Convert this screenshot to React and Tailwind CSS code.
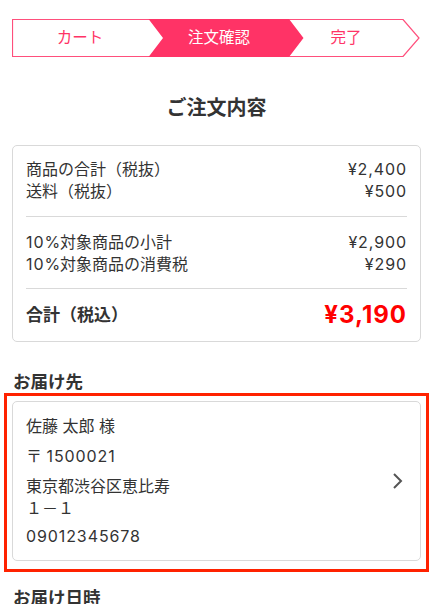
import React from "react";

const font = { fontFamily: 'Inter, "Noto Sans CJK JP", "Noto Sans", sans-serif' };

function N({ children }) {
  return <span className="tracking-[0.9px]">{children}</span>;
}

function Stepper() {
  return (
    <div className="relative mx-[12px] mt-[19px] h-[38px] w-[408px]">
      <svg className="absolute left-0 top-0" width="408" height="38" viewBox="0 0 408 38">
        <path d="M0.5 0.5 H391 L407 19 L391 37.5 H0.5 Z" fill="white" stroke="#ff4f7c" strokeWidth="1.2" />
        <polygon points="136.5,0 277,0 291.5,19 277,38 136.5,38 151,19" fill="#ff3366" />
      </svg>
      <div className="relative flex h-full items-center text-[15.5px]">
        <div className="flex w-[136px] justify-center text-[#ff3366]">カート</div>
        <div className="flex w-[142px] justify-center text-white">注文確認</div>
        <div className="flex w-[112px] justify-center text-[#ff3366]">完了</div>
      </div>
    </div>
  );
}

function Row({ label, value }) {
  return (
    <div className="flex justify-between leading-[22px]">
      <span>{label}</span>
      <N>{value}</N>
    </div>
  );
}

export default function App() {
  return (
    <div className="h-[604px] w-[433px] overflow-hidden bg-white text-[#333]" style={font}>
      <Stepper />
      <h1 className="mt-[37px] text-center text-[20px] font-bold leading-[28px]">ご注文内容</h1>

      <div className="mx-[12px] mt-[23px] rounded-[5px] border border-[#d9d9d9] px-[13px] pt-[12px] pb-[11px] text-[16px]">
        <Row label="商品の合計（税抜）" value="¥2,400" />
        <Row label="送料（税抜）" value="¥500" />
        <div className="mt-[14px] border-t border-[#d9d9d9]" />
        <div className="mt-[14px]">
          <Row label={<><N>10</N>%対象商品の小計</>} value="¥2,900" />
          <Row label={<><N>10</N>%対象商品の消費税</>} value="¥290" />
        </div>
        <div className="mt-[13px] border-t border-[#d9d9d9]" />
        <div className="mt-[11px] flex items-center justify-between leading-[30px]">
          <span className="text-[17px] font-bold">合計（税込）</span>
          <span className="text-[24px] font-bold tracking-[1px] text-[#ff0000]">¥3,190</span>
        </div>
      </div>

      <h2 className="mx-[13px] mt-[27px] text-[17.5px] font-bold leading-[26px]">お届け先</h2>

      <div className="mx-[4px] mt-[-2px] border-[3px] border-[#ff2200] px-[5px] pt-[5px] pb-[8px]">
        <div className="flex items-center rounded-[5px] border border-[#d9d9d9] pl-[13px] pr-[16px] pt-[13px] pb-[13px] text-[16px] leading-[22px]">
          <div className="flex flex-1 flex-col">
            <span>佐藤 太郎 様</span>
            <span className="mt-[8px]">〒 <N>1500021</N></span>
            <span className="mt-[8px]">東京都渋谷区恵比寿</span>
            <span>１－１</span>
            <span className="mt-[6px]"><N>09012345678</N></span>
          </div>
          <svg width="12" height="18" viewBox="0 0 12 18" fill="none">
            <path d="M2 2 L9 9 L2 16" stroke="#555" strokeWidth="2" />
          </svg>
        </div>
      </div>

      <h2 className="mx-[13px] mt-[13px] text-[17.5px] font-bold leading-[26px]">お届け日時</h2>
    </div>
  );
}
